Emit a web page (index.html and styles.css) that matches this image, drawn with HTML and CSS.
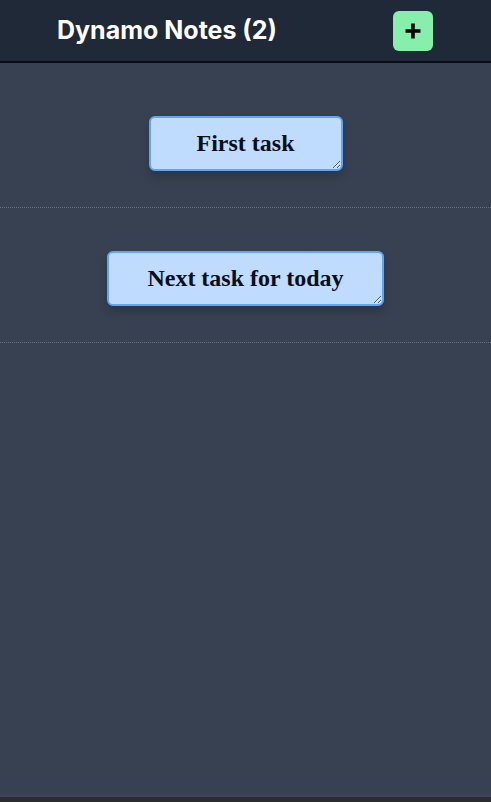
FILE: index.html
```html
<!DOCTYPE html>
<html lang="en">
<head>
<meta charset="utf-8">
<title>Dynamo Notes</title>
<link rel="stylesheet" href="styles.css">
</head>
<body>
<div class="app">
  <header class="topbar">
    <h1 class="title">Dynamo Notes (2)</h1>
    <button class="add-btn" aria-label="Add note">
      <svg width="22" height="22" viewBox="0 0 22 22"><path d="M11 3.5v15M3.5 11h15" stroke="#000" stroke-width="3.6" stroke-linecap="butt"/></svg>
    </button>
  </header>
  <main class="notes">
    <div class="note-row">
      <textarea class="note" style="width:194px">First task</textarea>
    </div>
    <div class="note-row">
      <textarea class="note" style="width:277px">Next task for today</textarea>
    </div>
  </main>
</div>
</body>
</html>
```
FILE: styles.css
```css
html {
  background: #2b2c30;
}
body {
  margin: 0;
  font-family: Inter, "Noto Sans", sans-serif;
}
.app {
  min-height: 795px;
  background: #374151;
  border-bottom: 2px solid #3f4459;
  overflow: hidden;
}
.topbar {
  height: 61px;
  background: #1f2937;
  border-bottom: 2px solid #0b0d12;
  display: flex;
  align-items: center;
  padding: 0 58px 0 57px;
  justify-content: space-between;
}
.title {
  margin: 0 0 2px;
  color: #fff;
  font-size: 25px;
  font-weight: 700;
}
.add-btn {
  width: 40px;
  height: 40px;
  border: none;
  border-radius: 6px;
  background: #86efac;
  display: flex;
  align-items: center;
  justify-content: center;
  padding: 0;
}
.notes {
  padding-top: 10px;
}
.note-row {
  display: flex;
  justify-content: center;
  padding: 43px 0 36px;
  border-bottom: 1px dotted #6b7280;
}
.note {
  box-sizing: border-box;
  height: 55px;
  background: #bfdbfe;
  border: 2px solid #60a5fa;
  border-radius: 6px;
  box-shadow: 0 6px 10px rgba(0, 0, 0, 0.18);
  font-family: "Liberation Serif", "DejaVu Serif", serif;
  font-weight: 700;
  font-size: 24px;
  line-height: 1.15;
  color: #0b0f1a;
  text-align: center;
  padding: 12px 6px 0;
  overflow: hidden;
  outline: none;
}
```
